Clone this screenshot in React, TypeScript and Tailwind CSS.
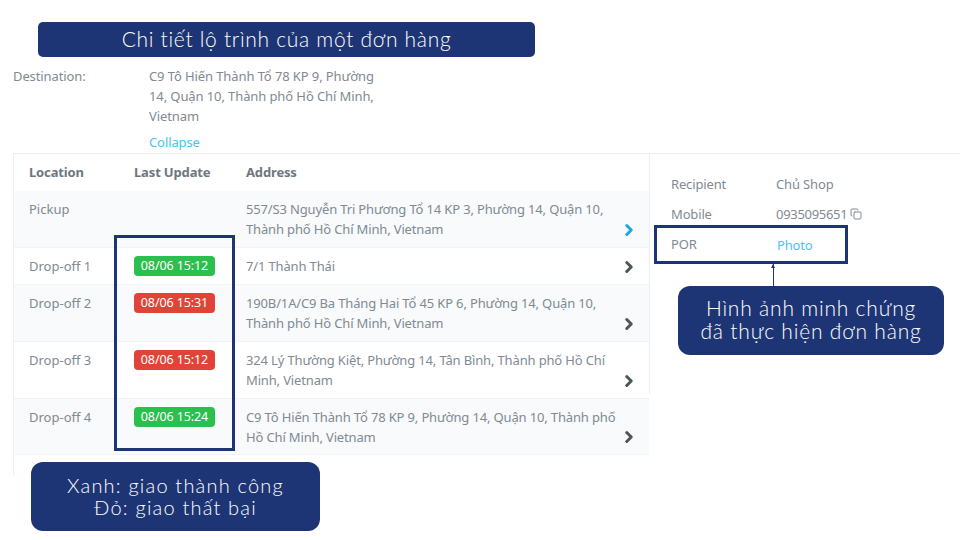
import { ChevronRight, Copy } from "lucide-react";

const bodyFont = "font-['Noto_Sans','Open_Sans',sans-serif]";
const noteFont = "font-['Lato','Noto_Sans',sans-serif]";

type Stop = {
  location: string;
  time?: string;
  ok?: boolean;
  address: string[];
  active?: boolean;
  tinted: boolean;
  height: string;
};

const stops: Stop[] = [
  {
    location: "Pickup",
    address: ["557/S3 Nguyễn Tri Phương Tổ 14 KP 3, Phường 14, Quận 10,", "Thành phố Hồ Chí Minh, Vietnam"],
    active: true,
    tinted: true,
    height: "h-[57px]",
  },
  { location: "Drop-off 1", time: "08/06 15:12", ok: true, address: ["7/1 Thành Thái"], tinted: false, height: "h-[37px]" },
  {
    location: "Drop-off 2",
    time: "08/06 15:31",
    ok: false,
    address: ["190B/1A/C9 Ba Tháng Hai Tổ 45 KP 6, Phường 14, Quận 10,", "Thành phố Hồ Chí Minh, Vietnam"],
    tinted: true,
    height: "h-[57px]",
  },
  {
    location: "Drop-off 3",
    time: "08/06 15:12",
    ok: false,
    address: ["324 Lý Thường Kiệt, Phường 14, Tân Bình, Thành phố Hồ Chí", "Minh, Vietnam"],
    tinted: false,
    height: "h-[57px]",
  },
  {
    location: "Drop-off 4",
    time: "08/06 15:24",
    ok: true,
    address: ["C9 Tô Hiến Thành Tổ 78 KP 9, Phường 14, Quận 10, Thành phố", "Hồ Chí Minh, Vietnam"],
    tinted: true,
    height: "h-[56px]",
  },
];

function StopRow({ stop }: { stop: Stop }) {
  return (
    <div className={`relative flex pl-[15px] pt-2 ${stop.height} ${stop.tinted ? "bg-[#f8fafc]" : "bg-white"} border-b border-[#f1f4f6]`}>
      <div className="w-[105px] shrink-0 text-[13px] leading-5">{stop.location}</div>
      <div className="w-[112px] shrink-0">
        {stop.time ? (
          <span
            className={`flex h-5 w-[81px] items-center justify-center rounded-[4px] text-[12.5px] leading-5 tracking-[-0.1px] text-white ${
              stop.ok ? "bg-[#2bbf4e]" : "bg-[#e04438]"
            }`}
          >
            {stop.time}
          </span>
        ) : null}
      </div>
      <div className="text-[13px] leading-5 tracking-[-0.15px] whitespace-nowrap">
        {stop.address.map((line) => (
          <div key={line}>{line}</div>
        ))}
      </div>
      <ChevronRight
        className={`absolute bottom-[8px] right-[11px] h-[18px] w-[18px] ${stop.active ? "text-[#1ea7e1]" : "text-[#4b555c]"}`}
        strokeWidth={4}
      />
    </div>
  );
}

export default function App() {
  return (
    <div className={`relative h-[540px] w-[960px] overflow-hidden bg-white text-[#7f8a92] ${bodyFont}`}>
      <div className="pl-[13px] pt-[66px]">
        <div className="flex text-[13px] leading-5 tracking-[-0.1px]">
          <div className="w-[136px] shrink-0">Destination:</div>
          <div className="w-[232px]">
            C9 Tô Hiến Thành Tổ 78 KP 9, Phường 14, Quận 10, Thành phố Hồ Chí Minh, Vietnam
            <div className="mt-[6px] text-[#4cc3f0]">Collapse</div>
          </div>
        </div>

        <div className="mt-[1px] flex border-t border-[#eceff1]">
          <div className="h-[322px] w-[636px] shrink-0 border-l border-[#eceff1]">
            <div className="flex h-[37px] items-center pl-[15px] text-[13px] font-bold tracking-[-0.15px] text-[#6d777e]">
              <div className="w-[105px]">Location</div>
              <div className="w-[112px]">Last Update</div>
              <div>Address</div>
            </div>
            {stops.map((stop) => (
              <StopRow key={stop.location} stop={stop} />
            ))}
          </div>

          <div className="h-[240px] w-[311px] border-l border-[#eceff1] pl-[21px] pt-[20px] text-[13px] leading-5 tracking-[-0.15px]">
            <div className="flex h-[30px]">
              <div className="w-[105px]">Recipient</div>
              <div>Chủ Shop</div>
            </div>
            <div className="flex h-[30px]">
              <div className="w-[105px]">Mobile</div>
              <div className="flex h-5 items-center gap-[3px] tracking-[-0.3px]">
                0935095651
                <Copy className="h-3 w-3" />
              </div>
            </div>
            <div className="flex h-[30px]">
              <div className="w-[106px]">POR</div>
              <div className="pt-px text-[#4cc3f0]">Photo</div>
            </div>
          </div>
        </div>
      </div>

      {/* annotations pasted over the screenshot */}
      <div className={`absolute left-[38px] top-[22px] flex h-[35px] w-[497px] items-center justify-center rounded-[5px] bg-[#1e3575] pb-[2px] text-[21px] font-light tracking-[0.7px] text-white ${noteFont}`}>
        Chi tiết lộ trình của một đơn hàng
      </div>
      <div className="absolute left-[114px] top-[235px] h-[216px] w-[121px] border-[3px] border-[#1e3575]" />
      <div className="absolute left-[654px] top-[225px] h-[39px] w-[194px] border-[3px] border-[#1e3575]" />
      <div className="absolute left-[773px] top-[264px] h-[22px] w-px bg-[#1e3575]" />
      <div className="absolute left-[771px] top-[264px] h-0 w-0 border-x-[2.5px] border-b-[4px] border-x-transparent border-b-[#1e3575]" />
      <div className={`absolute left-[678px] top-[286px] flex h-[69px] w-[266px] items-center justify-center rounded-[12px] bg-[#1e3575] pb-[3px] text-center text-[21px] font-light leading-[23px] tracking-[0.8px] text-white ${noteFont}`}>
        Hình ảnh minh chứng
        <br />
        đã thực hiện đơn hàng
      </div>
      <div className={`absolute left-[31px] top-[462px] flex h-[69px] w-[289px] items-center justify-center rounded-[12px] bg-[#1e3575] pb-[2px] text-center text-[20px] font-light leading-[22px] tracking-[1.2px] text-white ${noteFont}`}>
        Xanh: giao thành công
        <br />
        Đỏ: giao thất bại
      </div>
    </div>
  );
}
